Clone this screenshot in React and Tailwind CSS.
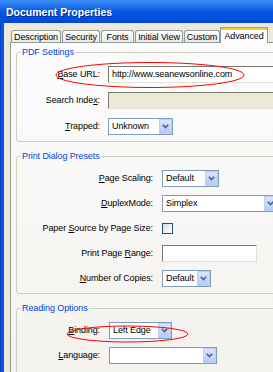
import React from "react";

const Chevron = () => (
  <svg width="7" height="5" viewBox="0 0 7 5">
    <path d="M0.8 0.8 L3.5 3.6 L6.2 0.8" stroke="#4D6185" strokeWidth="1.6" fill="none" />
  </svg>
);

function Select({ className, text }) {
  return (
    <div className={"flex h-[17px] border border-[#7F9DB9] bg-white " + className}>
      <div className="flex-1 pl-[3px] leading-[15px] whitespace-nowrap overflow-hidden">{text}</div>
      <div className="w-[13px] flex items-center justify-center bg-gradient-to-b from-[#D9E5FE] to-[#B7CAF6] border border-[#BCCFFA]">
        <Chevron />
      </div>
    </div>
  );
}

function SunkenInput({ className, text, disabled }) {
  return (
    <div
      className={
        "h-[17px] border border-t-[#7A7866] border-l-[#7A7866] border-r-[#E4E2D6] border-b-[#E4E2D6] pl-[3px] leading-[15px] whitespace-nowrap " +
        (disabled ? "bg-[#ECE9D8] " : "bg-white ") +
        className
      }
    >
      {text}
    </div>
  );
}

function Row({ labelW, gap, label, children, className = "" }) {
  return (
    <div className={"flex items-center h-[17px] " + className}>
      <div className={"text-right whitespace-nowrap " + labelW}>{label}</div>
      <div className={gap}>{children}</div>
    </div>
  );
}

function Tab({ children, className }) {
  return (
    <div
      className={
        "h-[12px] border border-b-0 border-[#919B9C] rounded-t-[3px] bg-gradient-to-b from-white to-[#ECEBE6] flex items-center justify-center leading-[10px] whitespace-nowrap " +
        className
      }
    >
      {children}
    </div>
  );
}

export default function App() {
  return (
    <div className="relative w-[273px] h-[372px] overflow-hidden bg-[#ECE9D8] flex flex-col font-['Liberation_Sans',Arial,sans-serif] text-[9px] tracking-[-0.1px] text-black">
      {/* Title bar */}
      <div className="h-[23px] shrink-0 bg-gradient-to-b from-[#3D8DF5] via-[#0458E6] to-[#0049D6] flex items-center pl-[6px] pt-[2px]">
        <span className="text-white font-bold text-[10.5px] tracking-[0px] [text-shadow:1px_1px_0_#0A2A8A]">
          Document Properties
        </span>
      </div>
      <div className="flex flex-1 min-h-0">
        <div className="w-[4px] shrink-0 bg-[#0055E5] border-l border-[#0041C4]" />
        <div className="flex flex-col flex-1 pl-[6px]">
          {/* Tabs */}
          <div className="h-[19px] shrink-0 flex items-end pl-[1px] relative z-10">
            <Tab className="w-[50px]">Description</Tab>
            <Tab className="w-[38px] ml-[1px]">Security</Tab>
            <Tab className="w-[33px] ml-[1px]">Fonts</Tab>
            <Tab className="w-[48px] ml-[1px]">Initial View</Tab>
            <Tab className="w-[36px] ml-[1px]">Custom</Tab>
            <div className="w-[48px] h-[16px] -mb-[1px] bg-[#FCFCFE] border-x border-[#919B9C] flex flex-col">
              <div className="h-[1px] bg-[#E68B2C] -mx-[1px]" />
              <div className="h-[2px] bg-[#FFC83C]" />
              <div className="flex-1 flex items-center justify-center leading-[10px] pb-[1px]">Advanced</div>
            </div>
          </div>
          {/* Panel */}
          <div className="flex-1 w-[300px] border-l border-t border-[#919B9C] bg-gradient-to-b from-[#FCFCFE] to-[#F3F2ED]">
            {/* PDF Settings */}
            <fieldset className="ml-[5px] mt-[3px] w-[290px] border border-[#D0D0BF] rounded-[3px] pb-[6px]">
              <legend className="ml-[4px] px-[1px] text-[#0046D5] leading-[12px]">PDF Settings</legend>
              <Row labelW="w-[83px]" gap="ml-[8px]" className="mt-[8px]" label={<><u>B</u>ase URL:</>}>
                <SunkenInput className="w-[180px]" text="http://www.seanewsonline.com" />
              </Row>
              <Row labelW="w-[83px]" gap="ml-[8px]" className="mt-[9px]" label={<>Search Inde<u>x</u>:</>}>
                <SunkenInput className="w-[180px]" text="" disabled />
              </Row>
              <Row labelW="w-[83px]" gap="ml-[8px]" className="mt-[9px]" label={<><u>T</u>rapped:</>}>
                <Select className="w-[65px]" text="Unknown" />
              </Row>
            </fieldset>
            {/* Print Dialog Presets */}
            <fieldset className="ml-[5px] mt-[8px] w-[290px] border border-[#D0D0BF] rounded-[3px] pb-[6px]">
              <legend className="ml-[4px] px-[1px] text-[#0046D5] leading-[12px]">Print Dialog Presets</legend>
              <Row labelW="w-[136px]" gap="ml-[9px]" className="mt-[8px]" label={<><u>P</u>age Scaling:</>}>
                <Select className="w-[57px]" text="Default" />
              </Row>
              <Row labelW="w-[136px]" gap="ml-[9px]" className="mt-[8px]" label={<><u>D</u>uplexMode:</>}>
                <Select className="w-[116px]" text="Simplex" />
              </Row>
              <Row labelW="w-[136px]" gap="ml-[9px]" className="mt-[8px]" label={<>Paper <u>S</u>ource by Page Size:</>}>
                <div className="w-[11px] h-[11px] border border-[#1C5180] bg-gradient-to-br from-[#DCDCD7] to-white" />
              </Row>
              <Row labelW="w-[136px]" gap="ml-[9px]" className="mt-[8px]" label={<>Print Page <u>R</u>ange:</>}>
                <SunkenInput className="w-[95px]" text="" />
              </Row>
              <Row labelW="w-[136px]" gap="ml-[9px]" className="mt-[8px]" label={<><u>N</u>umber of Copies:</>}>
                <Select className="w-[49px]" text="Default" />
              </Row>
            </fieldset>
            {/* Reading Options */}
            <fieldset className="ml-[5px] mt-[8px] w-[290px] h-[80px] border border-[#D0D0BF] rounded-[3px] pb-[6px]">
              <legend className="ml-[4px] px-[1px] text-[#0046D5] leading-[12px]">Reading Options</legend>
              <Row labelW="w-[83px]" gap="ml-[9px]" className="mt-[8px]" label={<><u>B</u>inding:</>}>
                <Select className="w-[63px]" text="Left Edge" />
              </Row>
              <Row labelW="w-[83px]" gap="ml-[9px]" className="mt-[8px]" label={<><u>L</u>anguage:</>}>
                <Select className="w-[108px]" text="" />
              </Row>
            </fieldset>
          </div>
        </div>
      </div>
      {/* Red annotation ellipses */}
      <svg className="absolute left-0 top-0 pointer-events-none" width="273" height="372">
        <ellipse cx="150" cy="75" rx="94" ry="12.5" fill="none" stroke="#FF0000" strokeWidth="1" />
        <ellipse cx="127.5" cy="334" rx="60.5" ry="8" fill="none" stroke="#FF0000" strokeWidth="1" />
      </svg>
    </div>
  );
}
